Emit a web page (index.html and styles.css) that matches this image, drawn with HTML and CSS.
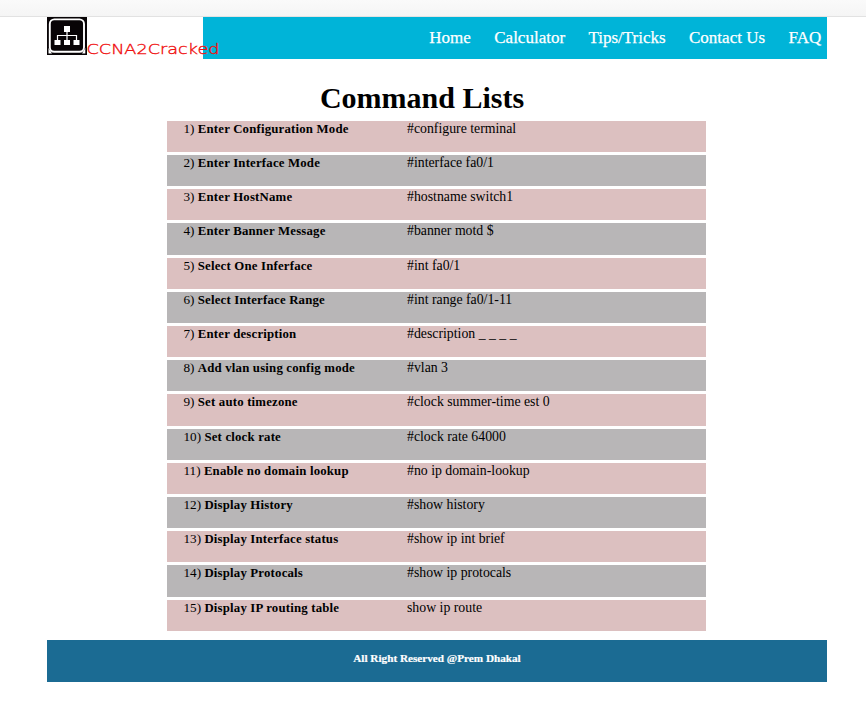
FILE: index.html
```html
<!DOCTYPE html>
<html lang="en">
<head>
<meta charset="utf-8">
<title>CCNA2Cracked</title>
<link rel="stylesheet" href="styles.css">
</head>
<body>
<div class="topbar"></div>
<div class="page">
  <header class="header">
    <a class="brand">
      <svg class="logo" viewBox="0 0 172 42">
        <rect width="40" height="38" fill="#080406"/>
        <rect x="2.800" y="2.400" width="34.200" height="32.400" rx="4.500" fill="#080406" stroke="#fff" stroke-width="1.900"/>
        <path d="M1.500 31L5 36.500H1.500zM38.300 31L35 36.500H38.300z" fill="#fff"/>
        <path d="M20 13v11M10.500 24v-5.500h19V24" fill="none" stroke="#fff" stroke-width="1.2"/>
        <path d="M17 9h6v6h-6zM7.500 23h6v5h-6zM17 23h6v5h-6zM26.500 23h6v5h-6z" fill="#fff"/>
        <text class="logo-text" x="39.500" y="36.500" textLength="133" lengthAdjust="spacingAndGlyphs">CCNA2Cracked</text>
      </svg>
    </a>
    <nav class="nav"><a>Home</a><a>Calculator</a><a>Tips/Tricks</a><a>Contact Us</a><a>FAQ</a></nav>
  </header>
  <h1>Command Lists</h1>
  <main class="list">
    <div class="row"><div>1) <b>Enter Configuration Mode</b></div><span>#configure terminal</span></div>
    <div class="row"><div>2) <b>Enter Interface Mode</b></div><span>#interface fa0/1</span></div>
    <div class="row"><div>3) <b>Enter HostName</b></div><span>#hostname switch1</span></div>
    <div class="row"><div>4) <b>Enter Banner Message</b></div><span>#banner motd $</span></div>
    <div class="row"><div>5) <b>Select One Inferface</b></div><span>#int fa0/1</span></div>
    <div class="row"><div>6) <b>Select Interface Range</b></div><span>#int range fa0/1-11</span></div>
    <div class="row"><div>7) <b>Enter description</b></div><span>#description _ _ _ _</span></div>
    <div class="row"><div>8) <b>Add vlan using config mode</b></div><span>#vlan 3</span></div>
    <div class="row"><div>9) <b>Set auto timezone</b></div><span>#clock summer-time est 0</span></div>
    <div class="row"><div>10) <b>Set clock rate</b></div><span>#clock rate 64000</span></div>
    <div class="row"><div>11) <b>Enable no domain lookup</b></div><span>#no ip domain-lookup</span></div>
    <div class="row"><div>12) <b>Display History</b></div><span>#show history</span></div>
    <div class="row"><div>13) <b>Display Interface status</b></div><span>#show ip int brief</span></div>
    <div class="row"><div>14) <b>Display Protocals</b></div><span>#show ip protocals</span></div>
    <div class="row"><div>15) <b>Display IP routing table</b></div><span>show ip route</span></div>
  </main>
  <footer class="footer">All Right Reserved @Prem Dhakal</footer>
</div>
</body>
</html>
```
FILE: styles.css
```css
* { box-sizing: border-box; }
body { margin: 0; background: #fff; color: #000; font-family: "Liberation Serif", serif; overflow: hidden; }
.topbar { height: 17px; background: linear-gradient(#fafafa, #f5f5f5); border-bottom: 1px solid #e2e2e2; }
.page { width: 780px; margin-left: 47px; }
.header { display: flex; height: 42px; background: #00b4d8; }
.brand { width: 156px; height: 42px; background: #fff; }
.logo { display: block; position: relative; width: 172px; height: 42px; overflow: visible; }
.logo-text { font-family: "DejaVu Sans", sans-serif; font-weight: 200; font-size: 14.5px; fill: #f01010; stroke: #f01010; stroke-width: 0.35px; }
.nav { flex: 1; display: flex; justify-content: flex-end; gap: 23.4px; padding-right: 5.8px; font-size: 17px; line-height: 42px; color: #fff; -webkit-text-stroke: 0.25px #fff; }
h1 { margin: 21px 0 0; width: 750px; text-align: center; font-size: 30px; line-height: 36px; height: 39px; }
.list { width: 539px; margin: 1px 0 0 120px; padding-top: 0.9px; display: grid; grid-auto-rows: 31.2px; row-gap: 3px; }
.row { display: grid; grid-template-columns: 223.5px 1fr; padding-left: 16.5px; background: #dcc0c0; font-size: 13.8px; line-height: 16px; }
.row:nth-child(even) { background: #b8b6b7; }
.row div { font-size: 13.2px; }
.row b { font-size: 12.8px; letter-spacing: 0.19px; }
.footer { height: 42px; margin-top: 9.1px; background: #1b6b93; color: #fff; text-align: center; font-weight: bold; font-size: 11.2px; line-height: 37px; -webkit-text-stroke: 0.2px #fff; }
```
